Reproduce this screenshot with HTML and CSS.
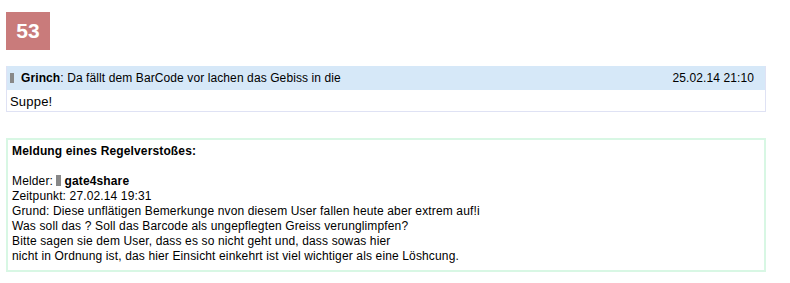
FILE: index.html
```html
<!DOCTYPE html>
<html lang="de">
<head>
    <meta charset="UTF-8">
    <title>Meldung</title>
    <link rel="stylesheet" href="styles.css">
</head>
<body>
    <div class="page">
        <div class="badge">53</div>

        <div class="post">
            <div class="post-head">
                <span class="author"><span class="rank"></span><b>Grinch</b>: Da fällt dem BarCode vor lachen das Gebiss in die</span>
                <span class="date">25.02.14 21:10</span>
            </div>
            <div class="post-body">Suppe!</div>
        </div>

        <div class="report">
            <b>Meldung eines Regelverstoßes:</b><br>
            <br>
            Melder: <span class="rank small"></span><b>gate4share</b><br>
            Zeitpunkt: 27.02.14 19:31<br>
            Grund: Diese unflätigen Bemerkunge nvon diesem User fallen heute aber extrem auf!i<br>
            Was soll das ? Soll das Barcode als ungepflegten Greiss verunglimpfen?<br>
            Bitte sagen sie dem User, dass es so nicht geht und, dass sowas hier<br>
            nicht in Ordnung ist, das hier Einsicht einkehrt ist viel wichtiger als eine Löshcung.
        </div>
    </div>
</body>
</html>
```

FILE: styles.css
```css
body {
    margin: 0;
    font-family: Arial, "Liberation Sans", sans-serif;
    font-size: 12px;
    color: #000;
    background: #fff;
}
.page {
    width: 760px;
    padding: 12px 6px;
}
.badge {
    width: 44px;
    height: 38px;
    line-height: 38px;
    background: #c97b7b;
    color: #fff;
    font-size: 21px;
    font-weight: bold;
    text-align: center;
}
.post {
    margin-top: 16px;
    border: 1px solid #dfe2f4;
    border-top: none;
}
.post-head {
    display: flex;
    justify-content: space-between;
    align-items: center;
    height: 24px;
    padding: 0 11px 0 3px;
    background: #d6e8f8;
    letter-spacing: 0.1px;
}
.rank {
    display: inline-block;
    width: 4px;
    height: 10px;
    margin-right: 7px;
    background: #888;
    vertical-align: -1px;
}
.rank.small {
    width: 5px;
    height: 11px;
    margin-right: 3px;
}
.post-body {
    height: 19px;
    line-height: 19px;
    padding: 2px 0 0 3px;
    font-size: 13px;
    letter-spacing: 0.2px;
}
.report {
    margin-top: 26px;
    border: 2px solid #d8f7e4;
    padding: 4px 4px 6px;
    line-height: 15px;
    letter-spacing: 0.14px;
}
```
